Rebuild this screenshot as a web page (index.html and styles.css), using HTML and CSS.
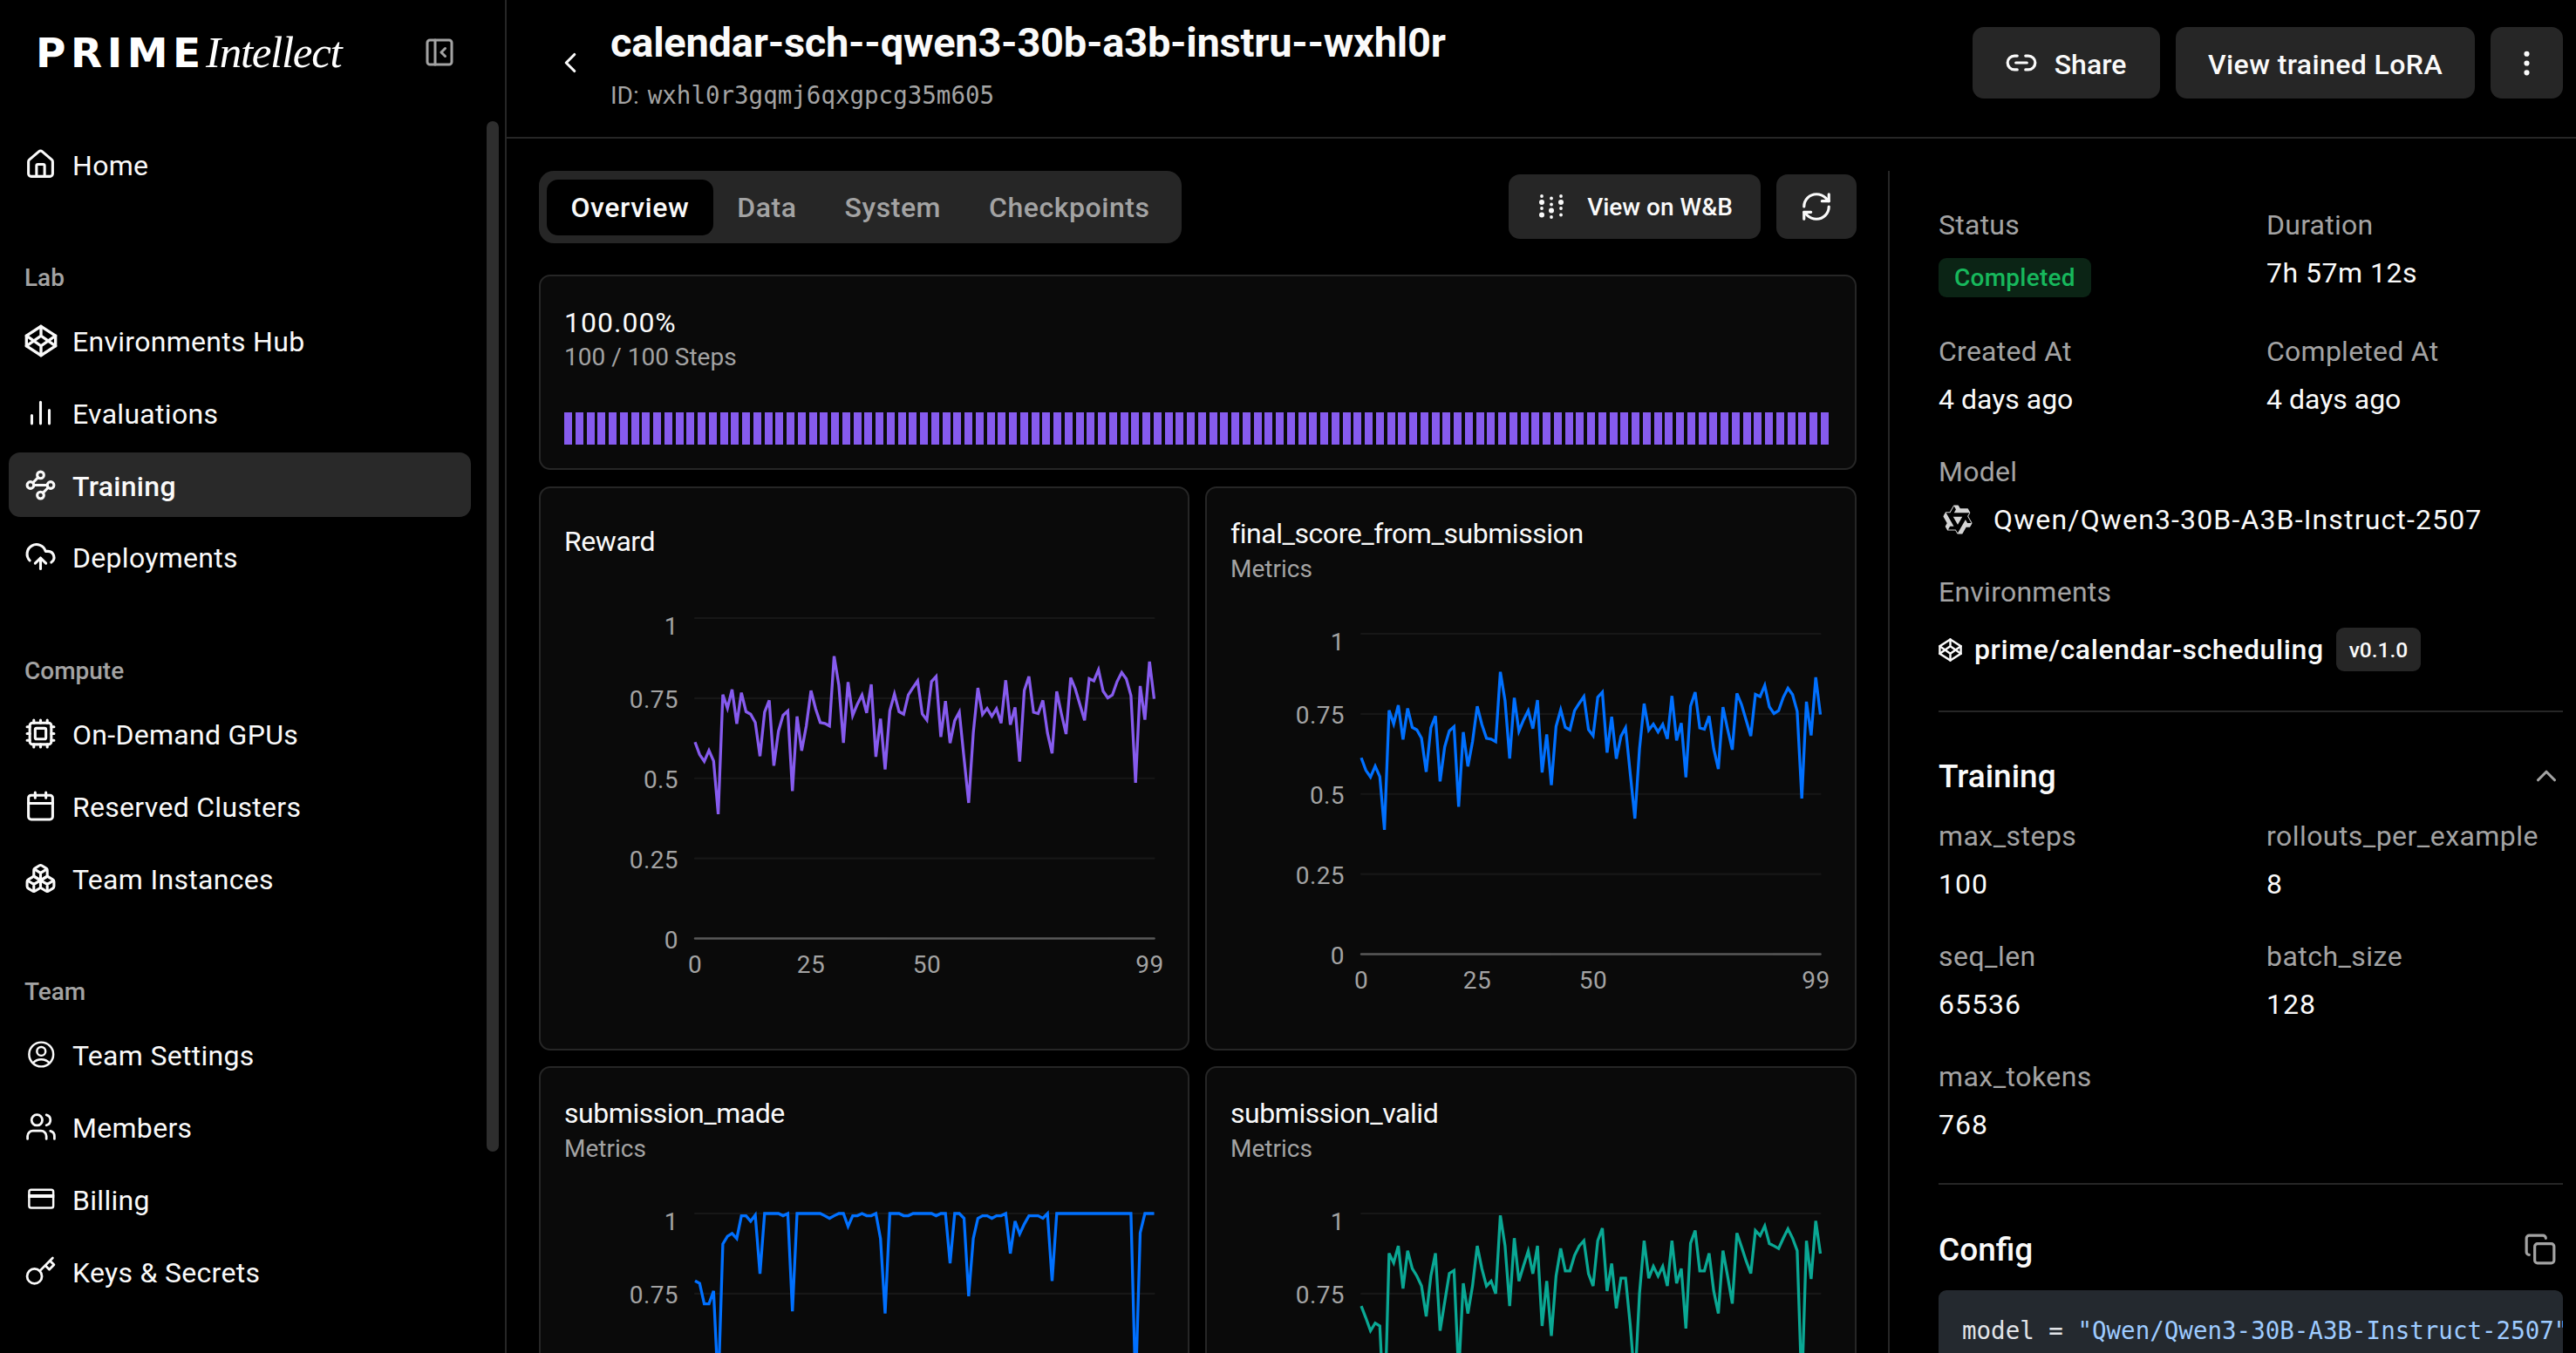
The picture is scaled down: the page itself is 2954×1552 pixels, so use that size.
FILE: index.html
```html
<!DOCTYPE html>
<html lang="en">
<head>
    <meta charset="UTF-8">
    <meta name="viewport" content="width=device-width, initial-scale=1.0">
    <title>calendar-sch--qwen3-30b-a3b-instru--wxhl0r</title>
    <link rel="stylesheet" href="styles.css">
</head>
<body>
    <div class="app">
        <aside class="sidebar">
            <div class="brand">
                <div class="logo"><span class="logo-prime">PRIME</span><span class="logo-intellect">Intellect</span></div>
                <svg class="collapse" viewBox="0 0 32 32"><rect x="2" y="2" width="28" height="28" rx="3"/><path d="M11 2v28M22.500 11.500L18 16l4.500 4.500"/></svg>
            </div>
            <nav class="nav">
                <a class="nav-item"><svg class="icon" viewBox="0 0 24 24"><path d="M15 21v-8a1 1 0 0 0-1-1h-4a1 1 0 0 0-1 1v8"/><path d="M3 10a2 2 0 0 1 .709-1.528l7-5.999a2 2 0 0 1 2.582 0l7 5.999A2 2 0 0 1 21 10v9a2 2 0 0 1-2 2H5a2 2 0 0 1-2-2z"/></svg><span>Home</span></a>

                <h3 class="nav-title">Lab</h3>
                <a class="nav-item"><svg class="icon hex" viewBox="0 0 24 24"><polygon points="12 2 22 8.500 22 15.500 12 22 2 15.500 2 8.500"/><path d="M12 22v-6.500M22 8.500l-10 7-10-7M2 15.500l10-7 10 7M12 2v6.500"/></svg><span>Environments Hub</span></a>
                <a class="nav-item"><svg class="icon" viewBox="0 0 24 24"><path d="M5.500 20v-6M12 20V4M18.500 20v-10"/></svg><span>Evaluations</span></a>
                <a class="nav-item active"><svg class="icon" viewBox="0 0 24 24"><circle cx="12" cy="4.500" r="2.500"/><path d="m10.200 6.300-3.900 3.900"/><circle cx="4.500" cy="12" r="2.500"/><path d="M7 12h10"/><circle cx="19.500" cy="12" r="2.500"/><path d="m13.800 17.700 3.900-3.900"/><circle cx="12" cy="19.500" r="2.500"/></svg><span>Training</span></a>
                <a class="nav-item"><svg class="icon" viewBox="0 0 24 24"><path d="M12 13v8"/><path d="M4 14.899A7 7 0 1 1 15.710 8h1.790a4.500 4.500 0 0 1 2.500 8.242"/><path d="m8 17 4-4 4 4"/></svg><span>Deployments</span></a>

                <h3 class="nav-title">Compute</h3>
                <a class="nav-item"><svg class="icon" viewBox="0 0 24 24"><rect x="4" y="4" width="16" height="16" rx="2"/><rect x="8" y="8" width="8" height="8" rx="1"/><path d="M12 20v2M12 2v2M17 20v2M17 2v2M2 12h2M2 17h2M2 7h2M20 12h2M20 17h2M20 7h2M7 20v2M7 2v2"/></svg><span>On-Demand GPUs</span></a>
                <a class="nav-item"><svg class="icon" viewBox="0 0 24 24"><rect x="3" y="4" width="18" height="18" rx="2"/><path d="M8 2v4M16 2v4M3 10h18"/></svg><span>Reserved Clusters</span></a>
                <a class="nav-item"><svg class="icon" viewBox="0 0 24 24"><path d="M2.970 12.920A2 2 0 0 0 2 14.630v3.240a2 2 0 0 0 .970 1.710l3 1.800a2 2 0 0 0 2.060 0L12 19v-5.500l-5-3-4.030 2.420Z"/><path d="m7 16.500-4.740-2.850M7 16.500l5-3M7 16.500v5.170"/><path d="M12 13.500V19l3.970 2.380a2 2 0 0 0 2.060 0l3-1.800a2 2 0 0 0 .970-1.710v-3.240a2 2 0 0 0-.970-1.710L17 10.500l-5 3Z"/><path d="m17 16.500-5-3M17 16.500l4.740-2.850M17 16.500v5.170"/><path d="M7.970 4.420A2 2 0 0 0 7 6.130v4.370l5 3 5-3V6.130a2 2 0 0 0-.970-1.710l-3-1.800a2 2 0 0 0-2.060 0l-3 1.800Z"/><path d="M12 8 7.260 5.150M12 8l4.740-2.850M12 13.500V8"/></svg><span>Team Instances</span></a>

                <h3 class="nav-title">Team</h3>
                <a class="nav-item"><svg class="icon thin" viewBox="0 0 24 24"><circle cx="12.500" cy="12" r="9"/><circle cx="12.500" cy="9.700" r="3.200"/><path d="M6.500 18.300c3-3.400 9-3.400 12 0"/></svg><span>Team Settings</span></a>
                <a class="nav-item"><svg class="icon users" viewBox="0 0 24 24"><path d="M16 21v-2a4 4 0 0 0-4-4H6a4 4 0 0 0-4 4v2"/><circle cx="9" cy="7" r="4"/><path d="M22 21v-2a4 4 0 0 0-3-3.870M16 3.130a4 4 0 0 1 0 7.750"/></svg><span>Members</span></a>
                <a class="nav-item"><svg class="icon thin" viewBox="0 0 24 24"><rect x="3.500" y="5" width="18" height="13.500" rx="1.500"/><path d="M3.500 9.200h18M3.500 10.300h18"/></svg><span>Billing</span></a>
                <a class="nav-item"><svg class="icon keys" viewBox="0 0 24 24"><circle cx="7.500" cy="15.500" r="5.500"/><path d="m21 2-9.600 9.600M15.500 7.500l3 3L22 7l-3-3"/></svg><span>Keys &amp; Secrets</span></a>
            </nav>
            <div class="scrollbar"></div>
        </aside>

        <main class="main">
            <header class="header">
                <svg class="back" viewBox="0 0 24 24"><path d="m15 18-6-6 6-6"/></svg>
                <div class="heading">
                    <h1>calendar-sch--qwen3-30b-a3b-instru--wxhl0r</h1>
                    <p class="run-id">ID: <span>wxhl0r3gqmj6qxgpcg35m605</span></p>
                </div>
                <div class="actions">
                    <button class="btn share"><svg viewBox="0 0 24 24"><path d="M9 17H7A5 5 0 0 1 7 7h2M15 7h2a5 5 0 1 1 0 10h-2M8 12h8"/></svg><span>Share</span></button>
                    <button class="btn lora"><span>View trained LoRA</span></button>
                    <button class="btn more"><svg viewBox="0 0 24 24"><circle cx="12" cy="12" r="1"/><circle cx="12" cy="5" r="1"/><circle cx="12" cy="19" r="1"/></svg></button>
                </div>
            </header>

            <div class="content">
                <section class="overview">
                    <div class="toolbar">
                        <div class="tabs">
                            <span class="tab selected">Overview</span>
                            <span class="tab">Data</span>
                            <span class="tab">System</span>
                            <span class="tab">Checkpoints</span>
                        </div>
                        <div class="toolbar-actions">
                            <button class="btn wandb">
                                <svg viewBox="0 0 30 30"><circle cx="4" cy="3" r="1.900"/><circle cx="4" cy="10" r="3"/><circle cx="4" cy="17" r="1.900"/><circle cx="4" cy="24.500" r="3"/><circle cx="15" cy="5.500" r="1.900"/><circle cx="15" cy="12.500" r="1.900"/><circle cx="15" cy="19.500" r="3"/><circle cx="15" cy="27" r="1.900"/><circle cx="26" cy="3" r="1.900"/><circle cx="26" cy="10" r="3"/><circle cx="26" cy="17" r="1.900"/><circle cx="26" cy="24.500" r="1.900"/></svg>
                                View on W&amp;B
                            </button>
                            <button class="btn refresh"><svg viewBox="0 0 24 24"><path d="M3 12a9 9 0 0 1 9-9 9.750 9.750 0 0 1 6.740 2.740L21 8"/><path d="M21 3v5h-5"/><path d="M21 12a9 9 0 0 1-9 9 9.750 9.750 0 0 1-6.740-2.740L3 16"/><path d="M8 16H3v5"/></svg></button>
                        </div>
                    </div>

                    <div class="card progress">
                        <p class="percent">100.00%</p>
                        <p class="steps">100 / 100 Steps</p>
                        <div class="bars" id="bars"></div>
                    </div>

                    <div class="charts">
                        <div class="card chart-card single">
                            <h2>Reward</h2>
                            <svg class="chart" data-series="reward" data-color="#865bee"></svg>
                        </div>
                        <div class="card chart-card">
                            <h2>final_score_from_submission</h2>
                            <p class="sub">Metrics</p>
                            <svg class="chart" data-series="reward" data-color="#0070ff"></svg>
                        </div>
                        <div class="card chart-card">
                            <h2>submission_made</h2>
                            <p class="sub">Metrics</p>
                            <svg class="chart" data-series="made" data-color="#0070ff"></svg>
                        </div>
                        <div class="card chart-card">
                            <h2>submission_valid</h2>
                            <p class="sub">Metrics</p>
                            <svg class="chart" data-series="valid" data-color="#0aa894"></svg>
                        </div>
                    </div>
                </section>

                <aside class="details">
                    <div class="fields">
                        <div class="field"><span class="label">Status</span><span class="badge">Completed</span></div>
                        <div class="field"><span class="label">Duration</span><span class="value duration">7h 57m 12s</span></div>
                        <div class="field"><span class="label">Created At</span><span class="value">4 days ago</span></div>
                        <div class="field"><span class="label">Completed At</span><span class="value">4 days ago</span></div>
                        <div class="field wide">
                            <span class="label">Model</span>
                            <span class="value model"><svg viewBox="0 0 24 24"><path d="M12.604 1.340c.393.690.784 1.382 1.174 2.075a.180.180 0 00.157.091h5.552c.174 0 .322.110.446.327l1.454 2.570c.190.337.240.478.024.837-.260.430-.513.864-.760 1.300l-.367.658c-.106.196-.223.280-.040.512l2.652 4.637c.172.301.111.494-.043.770-.437.785-.882 1.564-1.335 2.340-.159.272-.352.375-.680.370-.777-.016-1.552-.010-2.327.016a.099.099 0 00-.081.050 575.097 575.097 0 01-2.705 4.740c-.169.293-.380.363-.725.364-.997.003-2.002.004-3.017.002a.537.537 0 01-.465-.271l-1.335-2.323a.090.090 0 00-.083-.049H4.982c-.285.030-.553-.001-.805-.092l-1.603-2.770a.543.543 0 01-.002-.540l1.207-2.120a.198.198 0 000-.197 550.951 550.951 0 01-1.875-3.272l-.790-1.395c-.160-.310-.173-.496.095-.965.465-.813.927-1.625 1.387-2.436.132-.234.304-.334.584-.335a338.300 338.300 0 012.589-.001.124.124 0 00.107-.063l2.806-4.895a.488.488 0 01.422-.246c.524-.001 1.053 0 1.583-.006L11.704 1c.341-.003.724.032.900.340zm-3.432.403a.060.060 0 00-.052.030L6.254 6.788a.157.157 0 01-.135.078H3.253c-.056 0-.070.025-.041.074l5.810 10.156c.025.042.013.062-.034.063l-2.795.015a.218.218 0 00-.200.116l-1.320 2.310c-.044.078-.021.118.068.118l5.716.008c.046 0 .080.020.104.061l1.403 2.454c.046.081.092.082.139 0l5.006-8.760.783-1.382a.055.055 0 01.096 0l1.424 2.530a.122.122 0 00.107.062l2.763-.020a.040.040 0 00.035-.020.041.041 0 000-.040l-2.900-5.086a.108.108 0 010-.113l.293-.507 1.120-1.977c.024-.041.012-.062-.035-.062H9.200c-.059 0-.073-.026-.043-.077l1.434-2.505a.107.107 0 000-.114L9.225 1.774a.060.060 0 00-.053-.031zm6.290 8.020c.046 0 .058.020.034.060l-.832 1.465-2.613 4.585a.056.056 0 01-.050.029.058.058 0 01-.050-.029L8.498 9.841c-.020-.034-.010-.052.028-.054l.216-.012 6.722-.012z"/></svg>Qwen/Qwen3-30B-A3B-Instruct-2507</span>
                        </div>
                        <div class="field wide">
                            <span class="label">Environments</span>
                            <span class="value env"><svg viewBox="0 0 24 24"><polygon points="12 2 22 8.500 22 15.500 12 22 2 15.500 2 8.500"/><path d="M12 22v-6.500M22 8.500l-10 7-10-7M2 15.500l10-7 10 7M12 2v6.500"/></svg><b>prime/calendar-scheduling</b><span class="version">v0.1.0</span></span>
                        </div>
                    </div>

                    <div class="section training">
                        <div class="section-head"><h2>Training</h2><svg class="chevron" viewBox="0 0 24 24"><path d="m18 15-6-6-6 6"/></svg></div>
                        <div class="fields params">
                            <div class="field"><span class="label">max_steps</span><span class="value">100</span></div>
                            <div class="field"><span class="label">rollouts_per_example</span><span class="value">8</span></div>
                            <div class="field"><span class="label">seq_len</span><span class="value">65536</span></div>
                            <div class="field"><span class="label">batch_size</span><span class="value">128</span></div>
                            <div class="field"><span class="label">max_tokens</span><span class="value">768</span></div>
                        </div>
                    </div>

                    <div class="section config">
                        <div class="section-head"><h2>Config</h2><svg class="copy" viewBox="0 0 24 24"><rect x="8" y="8" width="14" height="14" rx="2"/><path d="M4 16c-1.100 0-2-.900-2-2V4c0-1.100.900-2 2-2h10c1.100 0 2 .900 2 2"/></svg></div>
                        <pre class="code">model = <span>"Qwen/Qwen3-30B-A3B-Instruct-2507"</span></pre>
                    </div>
                </aside>
            </div>
        </main>
    </div>

    <script>
        const series = {
            reward: [
                .613, .574, .553, .587, .554, .388, .761, .719, .777, .67, .767, .708, .7, .674, .569, .706, .743, .539, .647, .697,
                .71, .46, .693, .586, .663, .774, .717, .674, .671, .663, .881, .791, .611, .8, .696, .731, .76, .704, .793, .567,
                .686, .528, .711, .763, .708, .7, .76, .783, .804, .701, .682, .802, .818, .629, .741, .61, .68, .707, .563, .423,
                .641, .782, .699, .718, .694, .717, .672, .806, .667, .721, .552, .774, .818, .706, .702, .743, .641, .578, .771, .702,
                .638, .814, .779, .73, .681, .811, .804, .839, .772, .751, .76, .802, .83, .81, .758, .486, .788, .683, .864, .748
            ],
            made: [
                .79, .782, .718, .718, .758, .45, .905, .929, .938, .922, .993, .993, .976, .995, .812, 1, 1, 1, 1, .993,
                1, .695, 1, 1, 1, 1, 1, 1, .993, .985, .993, 1, 1, .96, .993, .993, 1, .993, .993, 1,
                .922, .688, 1, 1, 1, .993, .993, 1, 1, 1, 1, 1, .993, 1, 1, .845, 1, 1, .985, .742,
                .922, .985, .993, .993, .985, .993, .993, 1, .875, .976, .936, .967, .993, .993, .993, .985, 1, .789, 1, 1,
                1, 1, 1, 1, 1, 1, 1, 1, 1, 1, 1, 1, 1, 1, 1, .45, .94, 1, 1, 1
            ],
            valid: [
                .711, .674, .634, .658, .649, .35, .876, .846, .899, .766, .884, .828, .805, .774, .679, .805, .876, .634, .724, .813,
                .822, .5, .782, .688, .774, .899, .828, .774, .789, .75, .994, .899, .711, .923, .789, .837, .883, .812, .899, .649,
                .789, .618, .805, .891, .821, .821, .869, .899, .915, .812, .774, .915, .954, .758, .844, .704, .798, .798, .651, .47,
                .751, .915, .798, .835, .805, .835, .774, .915, .782, .828, .641, .907, .947, .821, .821, .876, .758, .688, .884, .805,
                .719, .939, .896, .852, .813, .947, .931, .961, .906, .899, .891, .923, .952, .923, .884, .45, .915, .796, .977, .875
            ]
        };

        // Plot area inside each chart svg
        const left = 150, right = 676.5, top0 = 20, bottom = 387.5;

        function drawChart(svg) {
            const data = series[svg.dataset.series];
            let out = '';
            [1, 0.75, 0.5, 0.25, 0].forEach(tick => {
                const y = bottom - tick * (bottom - top0);
                const labelY = tick === 1 ? y + 19 : y + 11.5;
                out += `<line class="${tick === 0 ? 'axis' : 'grid'}" x1="${left}" x2="${right}" y1="${y}" y2="${y}"/>`;
                out += `<text class="tick" text-anchor="end" x="${left - 19}" y="${labelY}">${tick}</text>`;
            });
            [[0, 150], [25, 283], [50, 416], [99, 671.5]].forEach(([step, x]) => {
                out += `<text class="tick" text-anchor="middle" x="${x}" y="${bottom + 39.5}">${step}</text>`;
            });
            const points = data.map((v, i) => {
                const x = left + i * (right - left) / (data.length - 1);
                const y = bottom - v * (bottom - top0);
                return x.toFixed(1) + ',' + y.toFixed(1);
            }).join(' ');
            out += `<polyline class="line" stroke="${svg.dataset.color}" points="${points}"/>`;
            svg.innerHTML = out;
        }

        document.querySelectorAll('.chart').forEach(drawChart);
        document.getElementById('bars').innerHTML = '<i></i>'.repeat(114);
    </script>
</body>
</html>
```
FILE: styles.css
```css
* {
    box-sizing: border-box;
    margin: 0;
    padding: 0;
}
body {
    background: #000;
    color: #fafafa;
    font-family: Roboto, sans-serif;
    font-size: 32px;
    overflow: hidden;
}
svg {
    display: block;
    flex: none;
    fill: none;
    stroke: currentColor;
    stroke-width: 2;
    stroke-linecap: round;
    stroke-linejoin: round;
    overflow: visible;
}
.app {
    display: flex;
    height: 1552px;
    overflow: hidden;
}

/* Sidebar */
.sidebar {
    position: relative;
    flex: none;
    width: 581px;
    border-right: 2px solid #262626;
}
.brand {
    display: flex;
    justify-content: space-between;
    align-items: center;
    height: 120px;
    padding: 0 59px 0 41px;
}
.logo {
    display: flex;
    align-items: baseline;
    color: #fff;
    line-height: 60px;
}
.logo-prime {
    width: 195px;
    font-family: "DejaVu Sans", sans-serif;
    font-weight: bold;
    font-size: 47px;
    letter-spacing: 5.5px;
}
.logo-intellect {
    font-family: "Liberation Serif", serif;
    font-style: italic;
    font-size: 51px;
    letter-spacing: -1.3px;
}
.collapse {
    width: 32px;
    height: 32px;
    stroke-width: 3;
    color: #a3a3a3;
}
.nav {
    display: flex;
    flex-direction: column;
    gap: 8.8px;
    padding: 31px 39px 0 10px;
}
.nav-item {
    display: flex;
    align-items: center;
    gap: 18px;
    height: 74px;
    padding-left: 18px;
    border-radius: 13px;
    letter-spacing: 0.3px;
}
.nav-item span {
    padding-top: 3px;
}
.nav-item.active {
    background: #292929;
    font-weight: 500;
}
.nav-title {
    height: 40px;
    margin: 63px 0 8px 18px;
    line-height: 43px;
    font-size: 28px;
    font-weight: 500;
    color: #a3a3a3;
}
.icon {
    width: 37px;
    height: 37px;
}
.icon.hex {
    width: 40px;
    height: 40px;
    margin: 0 -2px 0 -1px;
    stroke-linejoin: miter;
    stroke-width: 2;
}
.icon.thin {
    stroke-width: 1.6;
}
.icon.users {
    width: 40px;
    margin: 0 -2px 0 -1px;
    stroke-width: 1.8;
}
.icon.keys {
    stroke-width: 1.8;
}
.scrollbar {
    position: absolute;
    top: 139px;
    right: 7px;
    width: 14px;
    height: 1182px;
    border-radius: 7px;
    background: #2e2e2e;
}

/* Header */
.main {
    flex: 1;
    min-width: 0;
}
.header {
    display: flex;
    height: 159px;
    padding: 0 15px 0 0;
    border-bottom: 2px solid #262626;
}
.back {
    width: 38px;
    height: 38px;
    margin: 53px 0 0 54px;
}
.heading {
    flex: 1;
    padding: 20px 0 0 27px;
}
.heading h1 {
    font-size: 47px;
    line-height: 58px;
    letter-spacing: -0.25px;
}
.run-id {
    margin-top: 11px;
    font-size: 28px;
    line-height: 40px;
    color: #a3a3a3;
}
.run-id span {
    margin-left: 3px;
    font-family: "DejaVu Sans Mono", monospace;
    font-size: 27.5px;
}
.actions {
    display: flex;
    gap: 18px;
    margin-top: 31px;
}
.btn {
    display: flex;
    align-items: center;
    justify-content: center;
    height: 82px;
    border: none;
    border-radius: 13px;
    background: #262626;
    color: #fafafa;
    font-family: inherit;
    font-size: 32px;
    font-weight: 500;
}
.btn span {
    padding-top: 3px;
}
.share {
    width: 215px;
    gap: 19px;
    padding-right: 2px;
}
.share svg {
    width: 38px;
    height: 38px;
}
.lora {
    width: 343px;
    letter-spacing: 0.4px;
}
.more {
    width: 83px;
}
.more svg {
    width: 37px;
    height: 37px;
}

/* Overview */
.content {
    display: flex;
    padding: 37px 15px 0 37px;
}
.overview {
    flex: none;
    width: 1511px;
}
.toolbar {
    display: flex;
    justify-content: space-between;
    align-items: center;
    height: 83px;
}
.tabs {
    display: flex;
    align-items: center;
    height: 83px;
    padding: 0 9px;
    border-radius: 17px;
    background: #262626;
}
.tab {
    height: 64px;
    padding: 0 27.5px;
    line-height: 65px;
    border-radius: 13px;
    color: #a3a3a3;
    font-weight: 500;
    letter-spacing: 0.55px;
}
.tab.selected {
    background: #000;
    color: #fafafa;
}
.toolbar-actions {
    display: flex;
    gap: 18px;
    margin-top: -1px;
}
.toolbar .btn {
    height: 74px;
}
.wandb {
    width: 289px;
    gap: 26px;
    padding-left: 2px;
}
.toolbar .wandb {
    font-size: 28px;
}
.wandb svg {
    width: 30px;
    height: 30px;
    fill: currentColor;
    stroke: none;
}
.refresh {
    width: 92px;
}
.refresh svg {
    width: 38px;
    height: 38px;
}
.card {
    border: 2px solid #262626;
    border-radius: 13px;
    background: #0a0a0a;
}
.progress {
    height: 224px;
    margin-top: 36px;
    padding: 32px 31px 0 27px;
}
.percent {
    line-height: 42px;
    letter-spacing: 1px;
}
.steps,
.sub {
    font-size: 28px;
    line-height: 38px;
    color: #a3a3a3;
}
.bars {
    display: flex;
    gap: 3.75px;
    height: 37px;
    margin-top: 44px;
}
.bars i {
    flex: 1;
    background: #865bee;
}
.charts {
    display: grid;
    grid-template-columns: 746px 747px;
    grid-auto-rows: 647px;
    gap: 18px;
    margin-top: 19px;
}
.chart-card {
    padding: 30px 27px 0;
}
.chart-card h2 {
    font-size: 32px;
    font-weight: 400;
    line-height: 44px;
    letter-spacing: -0.45px;
}
.chart-card.single {
    padding-top: 39px;
}
.chart-card .chart {
    width: 688px;
    height: 440px;
    margin-top: 35px;
}
.chart-card.single .chart {
    margin-top: 46px;
}
.grid {
    stroke: #171717;
    stroke-width: 2.2;
}
.axis {
    stroke: #595959;
    stroke-width: 2.5;
}
.tick {
    fill: #a3a3a3;
    stroke: none;
    font-size: 28px;
    letter-spacing: 0.4px;
}
.line {
    stroke-width: 3.3;
    stroke-linecap: butt;
    stroke-linejoin: miter;
}

/* Details */
.details {
    flex: 1;
    min-width: 0;
    height: 1400px;
    margin-left: 36px;
    padding: 40px 0 0 56px;
    border-left: 2px solid #262626;
}
.fields {
    display: grid;
    grid-template-columns: 376px 1fr;
    row-gap: 39px;
}
.field {
    display: flex;
    flex-direction: column;
    align-items: flex-start;
    gap: 11px;
    line-height: 44px;
}
.field.wide {
    grid-column: span 2;
}
.label {
    color: #a3a3a3;
    letter-spacing: 0.25px;
}
.value {
    white-space: nowrap;
}
.duration {
    letter-spacing: 0.5px;
}
.badge {
    height: 45px;
    margin: 5px 0 1px;
    padding: 0 18px;
    border-radius: 9px;
    background: #0b2415;
    color: #17b85c;
    font-size: 28px;
    font-weight: 500;
    line-height: 46px;
    letter-spacing: 0.25px;
}
.model {
    display: flex;
    align-items: center;
    letter-spacing: 1.15px;
}
.model svg {
    width: 36px;
    height: 36px;
    margin: 0 23px 0 4px;
    fill: #d4d4d4;
    stroke: none;
}
.env {
    display: flex;
    align-items: center;
    height: 50px;
    margin-top: 8px;
}
.env svg {
    width: 29px;
    height: 29px;
    margin: 0 13px 0 -1px;
    stroke-linejoin: miter;
}
.env b {
    font-weight: 500;
    letter-spacing: 0.6px;
}
.version {
    height: 50px;
    margin-left: 14px;
    padding: 0 15px;
    border-radius: 9px;
    background: #262626;
    font-size: 24.5px;
    font-weight: 500;
    line-height: 51px;
}
.section {
    border-top: 2px solid #262626;
}
.training {
    margin-top: 45px;
    padding: 48px 0 45px;
}
.section-head {
    display: flex;
    justify-content: space-between;
    align-items: center;
    height: 50px;
}
.section-head h2 {
    font-size: 37px;
    font-weight: 500;
}
.chevron {
    width: 38px;
    height: 38px;
    color: #a3a3a3;
}
.copy {
    width: 38px;
    height: 38px;
    margin-right: 7px;
    color: #a3a3a3;
}
.params {
    margin-top: 22px;
}
.params .label {
    letter-spacing: 0.45px;
}
.params .value {
    letter-spacing: 1px;
}
.config {
    padding-top: 49px;
}
.code {
    height: 120px;
    margin-top: 22px;
    padding: 26px 0 0 27px;
    overflow: hidden;
    border-radius: 9px 9px 0 0;
    background: #24292f;
    color: #e1e4e8;
    font-family: "DejaVu Sans Mono", monospace;
    font-size: 27.5px;
    line-height: 40px;
}
.code span {
    color: #9ecbff;
}
```
